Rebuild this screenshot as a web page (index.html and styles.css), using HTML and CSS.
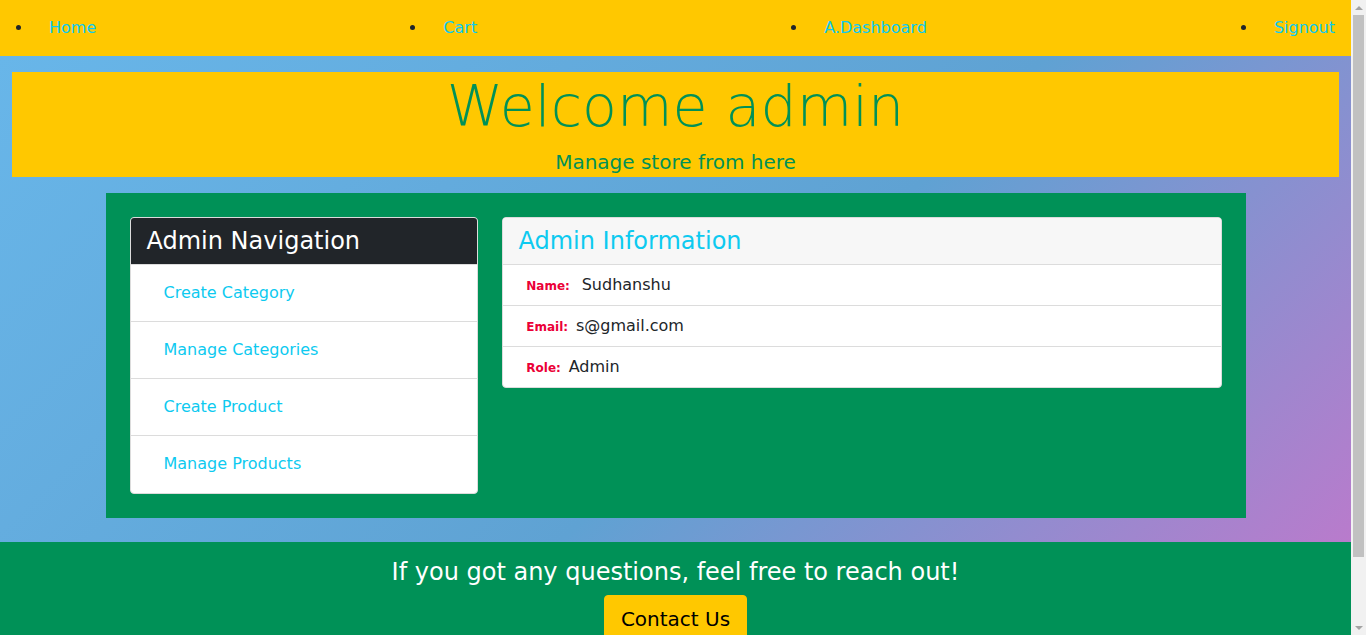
FILE: index.html
```
<!DOCTYPE html>
<html lang="en">
<head>
<meta charset="utf-8">
<title>Admin Dashboard</title>
<link rel="stylesheet" href="styles.css">
</head>
<body>
<nav class="topbar">
  <ul class="nav-list">
    <li class="nav-item"><a class="nav-link" href="#">Home</a></li>
    <li class="nav-item"><a class="nav-link" href="#">Cart</a></li>
    <li class="nav-item"><a class="nav-link" href="#">A.Dashboard</a></li>
    <li class="nav-item"><a class="nav-link" href="#">Signout</a></li>
  </ul>
</nav>
<main class="page">
  <section class="hero">
    <h1 class="hero-title">Welcome admin</h1>
    <p class="hero-lead">Manage store from here</p>
  </section>
  <section class="panel">
    <div class="card">
      <h4 class="card-header card-header-dark">Admin Navigation</h4>
      <ul class="list">
        <li class="list-item list-item-nav"><a class="list-link" href="#">Create Category</a></li>
        <li class="list-item list-item-nav"><a class="list-link" href="#">Manage Categories</a></li>
        <li class="list-item list-item-nav"><a class="list-link" href="#">Create Product</a></li>
        <li class="list-item list-item-nav"><a class="list-link" href="#">Manage Products</a></li>
      </ul>
    </div>
    <div class="card">
      <h4 class="card-header card-header-light">Admin Information</h4>
      <ul class="list">
        <li class="list-item list-item-info"><span class="badge badge-spaced">Name:</span>Sudhanshu</li>
        <li class="list-item list-item-info"><span class="badge">Email:</span>s@gmail.com</li>
        <li class="list-item list-item-info"><span class="badge">Role:</span>Admin</li>
      </ul>
    </div>
  </section>
</main>
<footer class="footer">
  <div class="footer-main">
    <h4 class="footer-title">If you got any questions, feel free to reach out!</h4>
    <button class="btn-contact" type="button">Contact Us</button>
  </div>
  <div class="footer-bottom"></div>
</footer>
<div class="scrollbar" aria-hidden="true">
  <span class="scroll-arrow scroll-up"></span>
  <span class="scroll-thumb"></span>
  <span class="scroll-arrow scroll-down"></span>
</div>
</body>
</html>
```
FILE: styles.css
```
html {
  margin: 0;
  padding: 0;
  background: #f1f1f1;
}
body {
  margin: 0 15px 0 0;
  padding: 0;
  font-family: "DejaVu Sans", "Liberation Sans", sans-serif;
  font-size: 16px;
  line-height: 1.5;
  color: #212529;
  background: #ffffff;
}
.scrollbar {
  position: fixed;
  top: 0;
  right: 0;
  width: 15px;
  height: 100vh;
  background: #f1f1f1;
  display: flex;
  flex-direction: column;
  align-items: center;
}
.scroll-arrow {
  flex: 0 0 15px;
  width: 15px;
  display: flex;
  align-items: center;
  justify-content: center;
}
.scroll-up::before {
  content: "";
  border-left: 4px solid transparent;
  border-right: 4px solid transparent;
  border-bottom: 4px solid #a3a3a3;
}
.scroll-down::before {
  content: "";
  border-left: 4px solid transparent;
  border-right: 4px solid transparent;
  border-top: 4px solid #a3a3a3;
}
.scroll-thumb {
  width: 11px;
  height: 542px;
  background: #c1c1c1;
  margin-bottom: auto;
}
.topbar {
  background: #ffc800;
}
.nav-list {
  display: flex;
  justify-content: space-between;
  margin: 0;
  padding: 8px 0 8px 33px;
}
.nav-item {
  display: list-item;
  color: #212529;
}
.nav-link {
  display: block;
  padding: 8px 16px;
  line-height: 24px;
  color: #0dcaf0;
  text-decoration: none;
}
.page {
  padding: 16px 0 24px;
  background: linear-gradient(135deg, #68b6e9 0%, #5fa2d3 57%, #b97bcc 100%);
}
.hero {
  margin: 0 12px;
  background: #ffc800;
  color: #009157;
  text-align: center;
}
.hero-title {
  margin: 0 0 8px;
  font-size: 57px;
  font-weight: 300;
  line-height: 66px;
  padding-top: 1px;
}
.hero-lead {
  margin: 0;
  font-size: 20px;
  line-height: 30px;
}
.panel {
  box-sizing: border-box;
  width: 1140px;
  margin: 16px auto 0;
  padding: 24px;
  background: #009157;
  display: grid;
  grid-template-columns: 348px 720px;
  gap: 24px;
  align-items: start;
}
.card {
  background: #ffffff;
  border: 1px solid #dcdcdc;
  border-radius: 4px;
  overflow: hidden;
}
.card-header {
  margin: 0;
  padding: 8px 16px;
  font-size: 24px;
  font-weight: 400;
  line-height: 30px;
  border-bottom: 1px solid #dcdcdc;
}
.card-header-dark {
  background: #212529;
  color: #ffffff;
}
.card-header-light {
  background: #f7f7f7;
  color: #0dcaf0;
}
.list {
  list-style: none;
  margin: 0;
  padding: 0;
}
.list-item + .list-item {
  border-top: 1px solid #dcdcdc;
}
.list-item-nav {
  padding: 16px;
  line-height: 24px;
}
.list-item-nav:last-child {
  padding-bottom: 17px;
}
.list-link {
  padding-left: 17px;
  color: #0dcaf0;
  text-decoration: none;
}
.list-item-info {
  padding: 8px 16px;
  line-height: 24px;
  color: #212529;
}
.badge {
  display: inline-block;
  padding: 0.35em 0.65em;
  font-size: 12px;
  font-weight: 700;
  line-height: 1;
  color: #eb0037;
}
.badge-spaced {
  margin-right: 4px;
}
.footer {
  background: #009157;
}
.footer-main {
  padding: 16px 0;
  text-align: center;
  color: #ffffff;
}
.footer-title {
  margin: 0 0 8px;
  font-size: 24px;
  font-weight: 400;
  line-height: 1.2;
}
.btn-contact {
  font-family: inherit;
  font-size: 20px;
  line-height: 30px;
  padding: 8px 16px;
  color: #000000;
  background: #ffc800;
  border: 1px solid #ffc800;
  border-radius: 4px;
}
.footer-bottom {
  height: 50px;
  background: #212529;
}
```
